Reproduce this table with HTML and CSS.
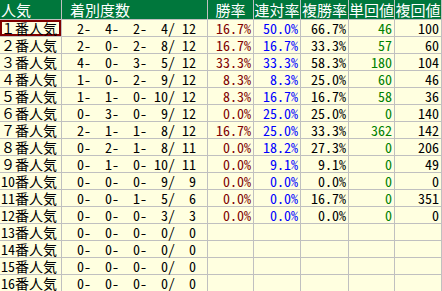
FILE: index.html
```html
<!DOCTYPE html>
<html lang="ja">
<head>
<meta charset="utf-8">
<link rel="stylesheet" href="styles.css">
</head>
<body>
<div class="tbl">
  <div class="h h-left">人気</div><div class="h h-rec">着別度数</div><div class="h">勝率</div><div class="h">連対率</div><div class="h">複勝率</div><div class="h">単回値</div><div class="h">複回値</div>

  <div class="c name sel">１番人気</div><div class="c rec">  2-  4-  2-  4/ 12</div><div class="c num win">16.7%</div><div class="c num ren">50.0%</div><div class="c num">66.7%</div><div class="c num tan">46</div><div class="c num">100</div>
  <div class="c name">２番人気</div><div class="c rec">  2-  0-  2-  8/ 12</div><div class="c num win">16.7%</div><div class="c num ren">16.7%</div><div class="c num">33.3%</div><div class="c num tan">57</div><div class="c num">60</div>
  <div class="c name">３番人気</div><div class="c rec">  4-  0-  3-  5/ 12</div><div class="c num win">33.3%</div><div class="c num ren">33.3%</div><div class="c num">58.3%</div><div class="c num tan">180</div><div class="c num">104</div>
  <div class="c name">４番人気</div><div class="c rec">  1-  0-  2-  9/ 12</div><div class="c num win">8.3%</div><div class="c num ren">8.3%</div><div class="c num">25.0%</div><div class="c num tan">60</div><div class="c num">46</div>
  <div class="c name">５番人気</div><div class="c rec">  1-  1-  0- 10/ 12</div><div class="c num win">8.3%</div><div class="c num ren">16.7%</div><div class="c num">16.7%</div><div class="c num tan">58</div><div class="c num">36</div>
  <div class="c name">６番人気</div><div class="c rec">  0-  3-  0-  9/ 12</div><div class="c num win">0.0%</div><div class="c num ren">25.0%</div><div class="c num">25.0%</div><div class="c num tan">0</div><div class="c num">140</div>
  <div class="c name">７番人気</div><div class="c rec">  2-  1-  1-  8/ 12</div><div class="c num win">16.7%</div><div class="c num ren">25.0%</div><div class="c num">33.3%</div><div class="c num tan">362</div><div class="c num">142</div>
  <div class="c name">８番人気</div><div class="c rec">  0-  2-  1-  8/ 11</div><div class="c num win">0.0%</div><div class="c num ren">18.2%</div><div class="c num">27.3%</div><div class="c num tan">0</div><div class="c num">206</div>
  <div class="c name">９番人気</div><div class="c rec">  0-  1-  0- 10/ 11</div><div class="c num win">0.0%</div><div class="c num ren">9.1%</div><div class="c num">9.1%</div><div class="c num tan">0</div><div class="c num">49</div>
  <div class="c name"><span class="hw">10</span>番人気</div><div class="c rec">  0-  0-  0-  9/  9</div><div class="c num win">0.0%</div><div class="c num ren">0.0%</div><div class="c num">0.0%</div><div class="c num tan">0</div><div class="c num">0</div>
  <div class="c name"><span class="hw">11</span>番人気</div><div class="c rec">  0-  0-  1-  5/  6</div><div class="c num win">0.0%</div><div class="c num ren">0.0%</div><div class="c num">16.7%</div><div class="c num tan">0</div><div class="c num">351</div>
  <div class="c name"><span class="hw">12</span>番人気</div><div class="c rec">  0-  0-  0-  3/  3</div><div class="c num win">0.0%</div><div class="c num ren">0.0%</div><div class="c num">0.0%</div><div class="c num tan">0</div><div class="c num">0</div>
  <div class="c name"><span class="hw">13</span>番人気</div><div class="c rec">  0-  0-  0-  0/  0</div><div class="c"></div><div class="c"></div><div class="c"></div><div class="c"></div><div class="c"></div>
  <div class="c name"><span class="hw">14</span>番人気</div><div class="c rec">  0-  0-  0-  0/  0</div><div class="c"></div><div class="c"></div><div class="c"></div><div class="c"></div><div class="c"></div>
  <div class="c name"><span class="hw">15</span>番人気</div><div class="c rec">  0-  0-  0-  0/  0</div><div class="c"></div><div class="c"></div><div class="c"></div><div class="c"></div><div class="c"></div>
  <div class="c name"><span class="hw">16</span>番人気</div><div class="c rec">  0-  0-  0-  0/  0</div><div class="c"></div><div class="c"></div><div class="c"></div><div class="c"></div><div class="c"></div>
</div>
</body>
</html>
```

FILE: styles.css
```css
html, body {
  margin: 0;
  padding: 0;
  overflow: hidden;
  background: #ffffff;
}

.tbl {
  display: grid;
  grid-template-columns: 61px 145px 45px 46px 47px 45px 46px;
  grid-template-rows: 19px;
  grid-auto-rows: 16px;
  gap: 1px;
  padding-right: 1px;
  width: 441px;
  background: #c0c0c0;
  font-family: "Noto Sans CJK JP", sans-serif;
}

.h {
  background: #00773c;
  color: #ffffff;
  font-size: 15px;
  line-height: 19px;
  text-align: center;
  white-space: nowrap;
}

.h-left {
  text-align: left;
  padding-left: 1px;
}

.h-rec {
  text-align: left;
  padding-left: 8px;
}

.c {
  background: #ffffe0;
  color: #000000;
  font-size: 14px;
  line-height: 16px;
  white-space: pre;
}

.name {
  padding-left: 1px;
}

.hw {
  font-feature-settings: "hwid" 1;
}

.sel {
  box-shadow: inset 0 0 0 2px #800000;
}

.rec,
.num {
  font-feature-settings: "hwid" 1;
}

.rec {
  padding-left: 1px;
}

.num {
  text-align: right;
  padding-right: 2px;
}

.win { color: #800000; }
.ren { color: #0000ff; }
.tan { color: #008000; }
```
